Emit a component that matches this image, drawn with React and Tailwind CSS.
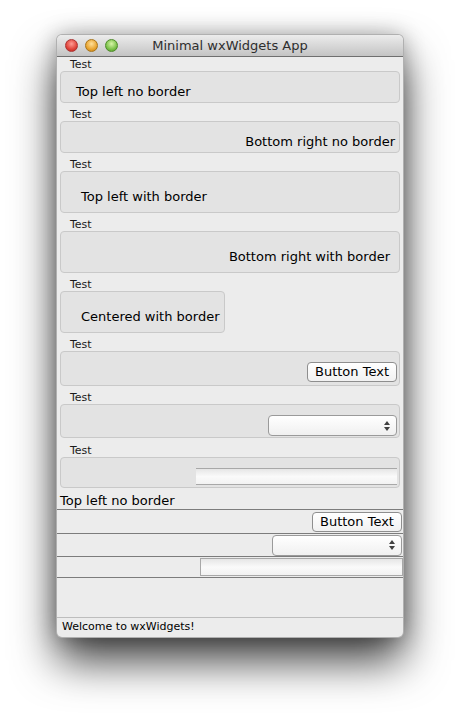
import React from "react";

const font = { fontFamily: '"Lucida Grande", "DejaVu Sans", sans-serif' };

const Label = ({ children }) => (
  <div className="h-[14px] pl-[13px] pt-[1px] text-[11px] leading-[13px] text-[#1a1a1a]">{children}</div>
);

const Box = ({ className = "", children }) => (
  <div className={`mx-[3px] rounded-[4px] border border-[#c9c9c9] bg-[#e3e3e3] ${className}`}>{children}</div>
);

const MacButton = ({ className = "" }) => (
  <div
    className={`flex h-[20px] items-center rounded-[4px] border border-[#8e8e8e] bg-gradient-to-b from-white to-[#f1f1f1] px-[7px] text-[13px] text-black ${className}`}
  >
    Button Text
  </div>
);

const Choice = ({ className = "" }) => (
  <div
    className={`flex h-[21px] items-center justify-end rounded-[4px] border border-[#9a9a9a] bg-gradient-to-b from-white to-[#f0f0f0] pr-[6px] ${className}`}
  >
    <div className="flex flex-col items-center gap-[2px]">
      <span className="block h-0 w-0 border-x-[3px] border-b-[4px] border-x-transparent border-b-[#404040]" />
      <span className="block h-0 w-0 border-x-[3px] border-t-[4px] border-x-transparent border-t-[#404040]" />
    </div>
  </div>
);

const Gauge = ({ className = "" }) => (
  <div className={`border-y border-[#a8a8a8] bg-gradient-to-b from-[#e6e6e6] via-[#fafafa] to-[#f2f2f2] ${className}`} />
);

export default function App() {
  return (
    <div className="h-[716px] w-[459px] bg-white pl-[57px] pt-[35px]" style={font}>
      <div className="flex h-[602px] w-[346px] flex-col overflow-hidden rounded-[5px] bg-[#ececec] shadow-[0_24px_44px_rgba(0,0,0,0.75),0_0_22px_rgba(0,0,0,0.3)] ring-1 ring-[#b0b0b0]">
        {/* title bar */}
        <div className="relative flex h-[22px] shrink-0 items-center border-b border-[#6f6f6f] bg-gradient-to-b from-[#ececec] to-[#c4c4c4]">
          <div className="flex gap-[7px] pl-[8px]">
            <span className="h-[13px] w-[13px] rounded-full border border-[#a33] bg-[radial-gradient(circle_at_50%_35%,#ff9c94,#e0443a_60%,#b5201a)]" />
            <span className="h-[13px] w-[13px] rounded-full border border-[#a8741a] bg-[radial-gradient(circle_at_50%_35%,#ffe09a,#e9a531_60%,#c07a10)]" />
            <span className="h-[13px] w-[13px] rounded-full border border-[#4e8a2a] bg-[radial-gradient(circle_at_50%_35%,#d8f5a8,#7cc24a_60%,#4f9325)]" />
          </div>
          <div className="absolute inset-0 flex items-center justify-center text-[13px] text-[#2e2e2e]">
            Minimal wxWidgets App
          </div>
        </div>

        {/* static boxes */}
        <div className="flex flex-col">
          <Label>Test</Label>
          <Box className="h-[32px] pl-[15px] pt-[12px] text-[13px] leading-[16px] text-black">Top left no border</Box>
          <div className="h-[4px]" />
          <Label>Test</Label>
          <Box className="flex h-[32px] justify-end pr-[4px] pt-[12px] text-[13px] leading-[16px] text-black">
            Bottom right no border
          </Box>
          <div className="h-[4px]" />
          <Label>Test</Label>
          <Box className="h-[42px] pl-[20px] pt-[17px] text-[13px] leading-[16px] text-black">Top left with border</Box>
          <div className="h-[4px]" />
          <Label>Test</Label>
          <Box className="flex h-[42px] justify-end pr-[9px] pt-[17px] text-[13px] leading-[16px] text-black">
            Bottom right with border
          </Box>
          <div className="h-[4px]" />
          <Label>Test</Label>
          <Box className="h-[42px] w-[165px] pl-[20px] pt-[17px] text-[13px] leading-[16px] text-black">
            Centered with border
          </Box>
          <div className="h-[4px]" />
          <Label>Test</Label>
          <Box className="flex h-[35px] justify-end pr-[2px] pt-[10px]">
            <MacButton />
          </Box>
          <div className="h-[4px]" />
          <Label>Test</Label>
          <Box className="flex h-[34px] justify-end pr-[2px] pt-[10px]">
            <Choice className="w-[129px]" />
          </Box>
          <div className="h-[5px]" />
          <Label>Test</Label>
          <Box className="flex h-[31px] justify-end pr-[2px] pt-[10px]">
            <Gauge className="h-[17px] w-[201px]" />
          </Box>
        </div>

        {/* plain sizer rows */}
        <div className="mt-[5px] h-[16px] pl-[3px] text-[13px] leading-[16px] text-black">Top left no border</div>
        <div className="flex h-[25px] items-center justify-end border-y border-[#7c7c7c] pr-[1px]">
          <MacButton className="w-[90px]" />
        </div>
        <div className="flex h-[23px] items-center justify-end border-b border-[#7c7c7c] pr-[1px]">
          <Choice className="w-[130px]" />
        </div>
        <div className="flex h-[21px] items-center justify-end border-b border-[#7c7c7c]">
          <Gauge className="h-[18px] w-[203px] border-x" />
        </div>

        <div className="flex-1" />

        {/* status bar */}
        <div className="flex h-[20px] shrink-0 items-center border-t border-[#bdbdbd] pl-[5px] text-[11px] text-black">
          Welcome to wxWidgets!
        </div>
      </div>
    </div>
  );
}
